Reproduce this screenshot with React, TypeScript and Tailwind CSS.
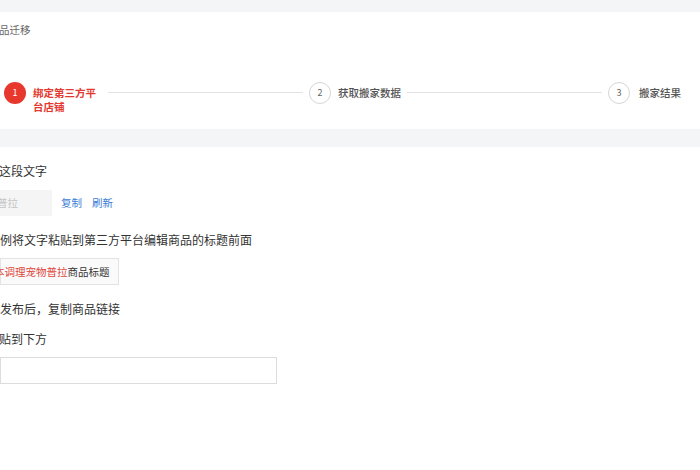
import React from "react";

const font = { fontFamily: '"Noto Sans CJK SC", "Noto Sans", sans-serif' };

function Circle({ n, active }: { n: number; active?: boolean }) {
  return active ? (
    <div className="w-[22px] h-[22px] shrink-0 rounded-full bg-[#e8382e] text-white text-[9px] flex items-center justify-center">
      {n}
    </div>
  ) : (
    <div className="w-[22px] h-[22px] shrink-0 rounded-full border border-[#d6d6d6] bg-white text-[#666] text-[9px] flex items-center justify-center">
      {n}
    </div>
  );
}

export default function App() {
  return (
    <div className="w-[700px] h-[470px] bg-white overflow-hidden" style={font}>
      <div className="h-[12px] bg-[#f4f5f7]" />
      <div className="h-[117px] bg-white pt-[11px]">
        <div className="text-[10.5px] leading-[14px] text-[#666] -ml-[1px]">品迁移</div>
        <div className="mt-[45px] flex items-start pl-[4px] pr-[19px]">
          <Circle n={1} active />
          <div className="ml-[7px] mt-[4px] w-[64px] text-[10.5px] leading-[14px] font-semibold text-[#e3392f]">
            绑定第三方平台店铺
          </div>
          <div className="flex-1 h-px bg-[#e3e3e3] mt-[10px] ml-[11px] mr-[6px]" />
          <Circle n={2} />
          <div className="ml-[7px] mt-[4px] text-[10.5px] leading-[14px] text-[#555] font-medium whitespace-nowrap">
            获取搬家数据
          </div>
          <div className="flex-1 h-px bg-[#e3e3e3] mt-[10px] ml-[6px] mr-[6px]" />
          <Circle n={3} />
          <div className="ml-[9px] mt-[4px] text-[10.5px] leading-[14px] text-[#555] font-medium whitespace-nowrap">
            搬家结果
          </div>
        </div>
      </div>
      <div className="h-[18px] bg-[#f4f5f7]" />
      <div className="pt-[16px] flex flex-col items-start text-[#333]">
        <div className="text-[12px] leading-[16px] -ml-[1px]">这段文字</div>
        <div className="mt-[11px] flex items-center">
          <div className="w-[52px] h-[26px] bg-[#f5f5f5] flex items-center text-[10.5px] text-[#c4c4c4]">
            <span className="-ml-[3px]">普拉</span>
          </div>
          <span className="ml-[9px] text-[10.5px] text-[#3b7dd8]">复制</span>
          <span className="ml-[10px] text-[10.5px] text-[#3b7dd8]">刷新</span>
        </div>
        <div className="mt-[16px] text-[12px] leading-[16px]">例将文字粘贴到第三方平台编辑商品的标题前面</div>
        <div className="mt-[10px] h-[27px] border border-[#e3e3e3] bg-[#fafafa] flex items-center pr-[8px] text-[10.5px]">
          <span className="-ml-[7px] text-[#e0463c]">本调理宠物普拉</span>
          <span className="text-[#333]">商品标题</span>
        </div>
        <div className="mt-[16px] text-[12px] leading-[16px]">发布后，复制商品链接</div>
        <div className="mt-[14px] text-[12px] leading-[16px] -ml-[1px]">贴到下方</div>
        <div className="mt-[10px] w-[277px] h-[27px] border border-[#dcdcdc] bg-white" />
      </div>
    </div>
  );
}
